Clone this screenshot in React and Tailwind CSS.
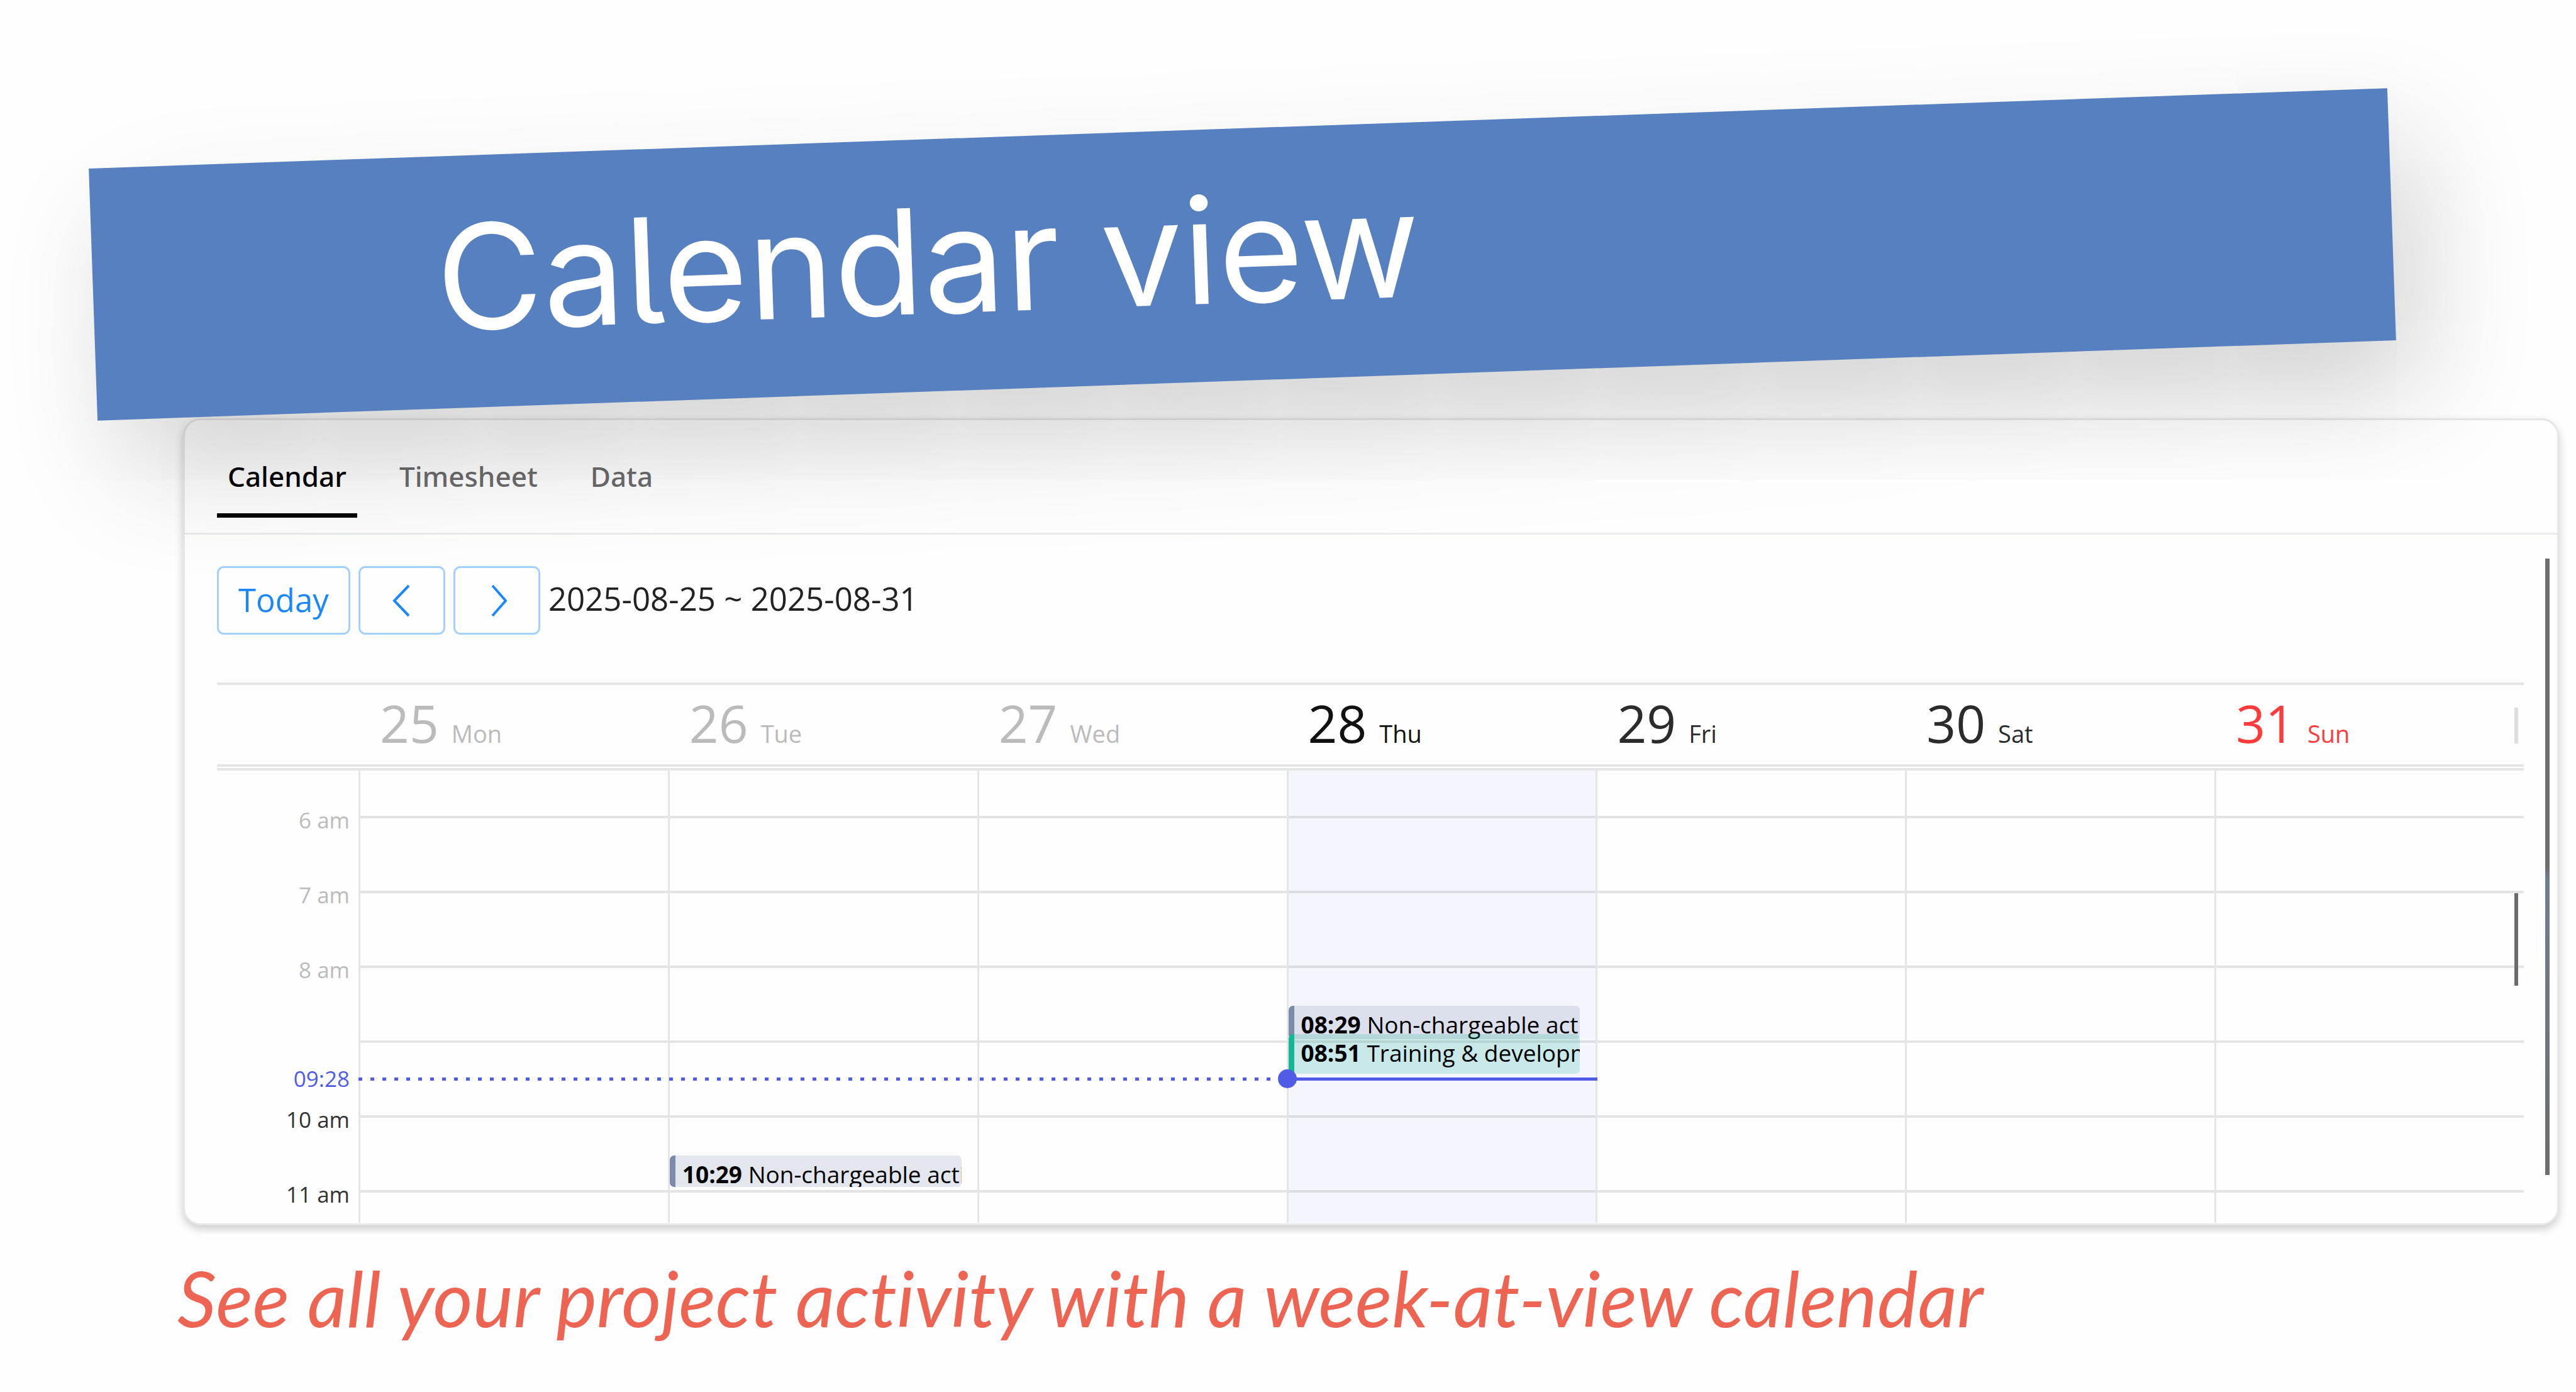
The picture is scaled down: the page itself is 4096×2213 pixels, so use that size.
const DAYS = [
  { num: "25", name: "Mon", tone: "text-[#bbbbbb]" },
  {
    num: "26",
    name: "Tue",
    tone: "text-[#bbbbbb]",
    events: [
      { time: "10:29", title: "Non-chargeable activity", box: "top-[612px] h-[50px] border-[#7a8ba8] bg-[#7a8ba8]/20" },
    ],
  },
  { num: "27", name: "Wed", tone: "text-[#bbbbbb]" },
  {
    num: "28",
    name: "Thu",
    tone: "text-[#111111]",
    today: true,
    events: [
      { time: "08:29", title: "Non-chargeable activity", box: "top-[374px] h-[53px] border-[#7a8ba8] bg-[#7a8ba8]/20" },
      { time: "08:51", title: "Training & development", box: "top-[419px] h-[63px] border-[#12b896] bg-[#12b896]/20" },
    ],
  },
  { num: "29", name: "Fri", tone: "text-[#2b2b2b]" },
  { num: "30", name: "Sat", tone: "text-[#2b2b2b]" },
  { num: "31", name: "Sun", tone: "text-[#ff3b3b]" },
];

const HOURS = [
  { label: "6 am", tone: "text-[#bbbbbb]" },
  { label: "7 am", tone: "text-[#bbbbbb]" },
  { label: "8 am", tone: "text-[#bbbbbb]" },
  { label: "", tone: "" },
  { label: "10 am", tone: "text-[#333333]" },
  { label: "11 am", tone: "text-[#333333]" },
];

const ROWS = "grid grid-rows-[76px_repeat(5,119px)_48px]";
const COLS = "grid grid-cols-[225px_repeat(7,minmax(0,1fr))]";

function Tab({ label, active }) {
  return (
    <button
      type="button"
      role="tab"
      aria-selected={active}
      className={
        "border-b-[7px] px-[17px] pb-[29px] font-['Noto_Sans',sans-serif] text-[44px] leading-[60px] font-medium " +
        (active ? "border-black text-black" : "border-transparent text-[#6b6b6b]")
      }
    >
      {label}
    </button>
  );
}

function NavButton({ label, path }) {
  return (
    <button
      type="button"
      aria-label={label}
      className="flex h-[109px] w-[138px] items-center justify-center rounded-[11px] border-[3px] border-[#a3d0ff] text-[#1a87ff]"
    >
      <svg className="h-[52px] w-[32px]" viewBox="0 0 32 52" fill="none" stroke="currentColor" strokeWidth="4">
        <path d={path} />
      </svg>
    </button>
  );
}

function Event({ time, title, box }) {
  return (
    <div
      className={
        "absolute right-[25px] left-0 overflow-hidden rounded-[7px] border-l-[9px] pt-[6px] pl-[11px] text-[37px] leading-[48px] whitespace-nowrap text-black " +
        box
      }
    >
      <strong className="font-bold">{time}</strong> {title}
    </div>
  );
}

function DayColumn({ day }) {
  return (
    <div className={"relative border-l-[3px] border-[#e5e5e5] " + (day.today ? "bg-[#515ce6]/5" : "")}>
      <div className={ROWS}>
        {HOURS.map((_, i) => (
          <div key={i} className="border-b-4 border-black/10" />
        ))}
        <div />
      </div>
      {(day.events || []).map((e) => (
        <Event key={e.time} {...e} />
      ))}
      {day.today && (
        <div className="absolute top-[488px] -right-[3px] -left-[2px] z-10 h-[5px] bg-[#515ce6]">
          <span className="absolute -top-[13px] -left-[15px] size-[30px] rounded-full bg-[#515ce6]" />
        </div>
      )}
    </div>
  );
}

export default function App() {
  return (
    <main className="flex min-h-screen flex-col overflow-hidden bg-[#fefefe] font-['Open_Sans','Noto_Sans',sans-serif]">
      <header className="relative z-10 mt-[204px] mr-[292px] ml-[147px] flex h-[401px] -rotate-2 items-center bg-[#5780c0] pb-[16px] pl-[546px] shadow-[40px_80px_180px_rgba(0,0,0,0.18)]">
        <h1 className="font-['Inter',sans-serif] text-[232px] leading-none whitespace-nowrap text-white [font-feature-settings:'cv05']">
          Calendar view
        </h1>
      </header>

      <section className="relative mt-[60px] mr-[27px] ml-[291px] rounded-[28px] border-[3px] border-[#e6e8e8] bg-[#fefefe] pb-px shadow-[0_6px_14px_rgba(0,0,0,0.2)]">
        <div role="tablist" className="flex h-[182px] items-end gap-[50px] border-b-[3px] border-[#e9ecef] pb-[24px] pl-[51px]">
          <Tab label="Calendar" active />
          <Tab label="Timesheet" active={false} />
          <Tab label="Data" active={false} />
        </div>

        <div className="flex items-center gap-[13px] pt-[50px] pb-[76px] pl-[51px]">
          <button
            type="button"
            className="h-[109px] rounded-[11px] border-[3px] border-[#a3d0ff] px-[31px] pb-[4px] text-[51px] leading-[60px] text-[#1a87ff]"
          >
            Today
          </button>
          <NavButton label="Previous week" path="M27 2 L4 26 L27 50" />
          <NavButton label="Next week" path="M9 2 L30 26 L9 50" />
          <time className="pb-[8px] text-[51px] leading-[60px] text-[#222222]">2025-08-25 ~ 2025-08-31</time>
        </div>

        <div className="mr-[53px] ml-[51px]">
          <div className={"relative h-[134px] border-y-4 border-[#e5e5e5] " + COLS}>
            <div />
            {DAYS.map((d) => (
              <div key={d.num} className={"flex items-baseline gap-[20px] pl-[34px] leading-[120px] " + d.tone}>
                <span className="text-[82px]">{d.num}</span>
                <span className="text-[38px]">{d.name}</span>
              </div>
            ))}
            <span className="absolute top-[36px] right-[9px] h-[57px] w-[6px] bg-[#dddddd]" />
          </div>

          <div className={"relative mt-[2px] border-t-4 border-[#e5e5e5] " + COLS}>
            <div className={"pr-[14px] text-right text-[35px] leading-[40px] " + ROWS}>
              <div />
              {HOURS.map((h, i) => (
                <div key={i} className={h.tone}>
                  <span className="-mt-[17px] block">{h.label}</span>
                </div>
              ))}
            </div>
            {DAYS.map((d) => (
              <DayColumn key={d.num} day={d} />
            ))}
            <span className="absolute top-[470px] left-0 w-[211px] text-right text-[35px] leading-[40px] text-[#515ce6]">
              09:28
            </span>
            <span className="absolute top-[488px] left-[225px] h-[5px] w-[calc((100%-225px)*3/7)] bg-[repeating-linear-gradient(90deg,#515ce6_0_6px,transparent_6px_19px)]" />
            <span className="absolute top-[195px] right-[9px] h-[147px] w-[6px] bg-[#6b6b6b]" />
          </div>
        </div>

        <span className="absolute top-[220px] right-[12px] bottom-[77px] w-[7px] bg-linear-to-b from-[#6e6e6e] from-50% via-[#6d7f93] via-52% to-[#6e6e6e] to-95%" />
      </section>

      <p className="mt-[50px] ml-[282px] font-['Lato',sans-serif] text-[122px] leading-[130px] whitespace-nowrap text-[#ee6453] italic [font-variant-ligatures:none]">
        See all your project activity with a week-at-view calendar
      </p>
    </main>
  );
}
